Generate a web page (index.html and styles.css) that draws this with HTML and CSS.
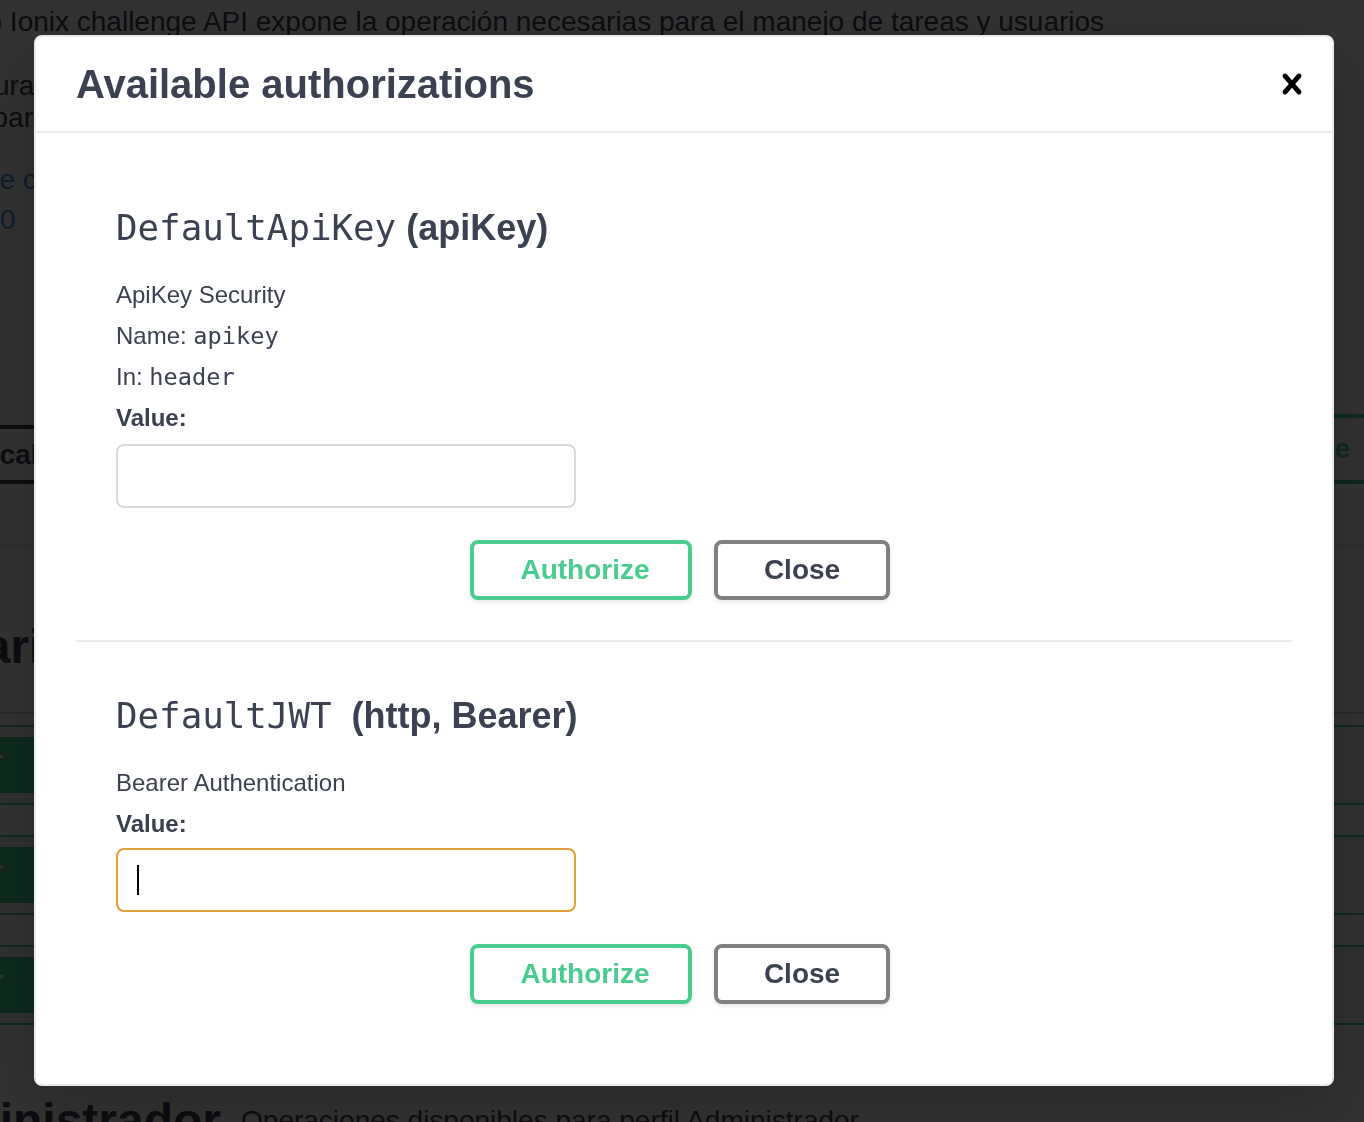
FILE: index.html
```html
<!DOCTYPE html>
<html lang="es">
<head>
<meta charset="utf-8">
<title>Swagger UI - Available authorizations</title>
<link rel="stylesheet" href="styles.css">
</head>
<body>
<div class="page">
  <div class="info">
    <div class="bg-line line-1">El proyecto Ionix challenge API expone la operación necesarias para el manejo de tareas y usuarios</div>
    <div class="bg-line line-2">La estructura del proyecto se basa en servicios REST con autenticación</div>
    <div class="bg-line line-3">Disponible para perfiles de usuario y administrador</div>
    <div class="bg-link line-4">Contacte con el desarrollador</div>
    <div class="bg-link line-5">Apache 2.0</div>
  </div>

  <div class="scheme-container">
    <div class="select-box">http://localhost:8080</div>
    <div class="top-authorize"><span class="top-authorize-text">Authorize</span><svg width="40" height="40" viewBox="0 0 20 20"><path fill="#49cc90" d="M15.8 8H14V5.6C14 2.703 12.665 1 10 1 7.334 1 6 2.703 6 5.6V8H4c-.553 0-1 .646-1 1.199V17c0 .549.428 1.139.951 1.307l1.197.387C5.672 18.861 6.550 19 7.100 19h5.8c.549 0 1.428-.139 1.951-.307l1.196-.387c.524-.167.953-.757.953-1.306V9.199C17 8.646 16.352 8 15.8 8zM12 8H8V5.199C8 3.754 8.797 3 10 3s2 .754 2 2.199V8z"/></svg></div>
  </div>

  <div class="tag-section">
    <div class="tag-heading"><span class="tag-name">Usuario</span><span class="tag-desc">Operaciones disponibles para perfil Usuario</span></div>
    <div class="opblock"><div class="op-summary"><span class="op-method">POST</span><span class="op-path">/usuario/tareas</span></div></div>
    <div class="opblock"><div class="op-summary"><span class="op-method">POST</span><span class="op-path">/usuario/tareas/estado</span></div></div>
    <div class="opblock"><div class="op-summary"><span class="op-method">POST</span><span class="op-path">/usuario/tareas/listar</span></div></div>
  </div>

  <div class="tag-section tag-section-next">
    <div class="tag-heading"><span class="tag-name">Administrador</span><span class="tag-desc">Operaciones disponibles para perfil Administrador</span></div>
  </div>
</div>

<div class="backdrop"></div>

<div class="modal">
  <div class="modal-header">
    <h3 class="modal-title">Available authorizations</h3>
    <button class="close-modal" type="button" aria-label="Close">
      <svg width="40" height="40" viewBox="0 0 20 20"><path d="M14.348 14.849a1.2 1.2 0 0 1-1.697 0L10 11.819l-2.651 3.029a1.2 1.2 0 1 1-1.697-1.697l2.758-3.150-2.759-3.152a1.2 1.2 0 1 1 1.697-1.697L10 8.183l2.651-3.031a1.2 1.2 0 1 1 1.697 1.697l-2.758 3.152 2.758 3.150a1.2 1.2 0 0 1 0 1.698z"/></svg>
    </button>
  </div>
  <div class="modal-content">
    <div class="auth-container">
      <h4 class="auth-title"><code class="auth-code">DefaultApiKey</code> (apiKey)</h4>
      <p class="auth-line">ApiKey Security</p>
      <p class="auth-line">Name: <code class="line-code">apikey</code></p>
      <p class="auth-line">In: <code class="line-code">header</code></p>
      <label class="auth-line auth-label">Value:</label>
      <div class="input-wrap"><input class="auth-input" type="text"></div>
      <div class="auth-btns">
        <button class="btn btn-authorize" type="button">Authorize</button>
        <button class="btn btn-close" type="button">Close</button>
      </div>
    </div>
    <div class="auth-container auth-last">
      <h4 class="auth-title"><code class="auth-code">DefaultJWT</code>&nbsp; (http, Bearer)</h4>
      <p class="auth-line">Bearer Authentication</p>
      <label class="auth-line auth-label">Value:</label>
      <div class="input-wrap input-focused"><input class="auth-input" type="text"></div>
      <div class="auth-btns">
        <button class="btn btn-authorize" type="button">Authorize</button>
        <button class="btn btn-close" type="button">Close</button>
      </div>
    </div>
  </div>
</div>
</body>
</html>
```

FILE: styles.css
```css
html, body {
  margin: 0;
  padding: 0;
}

body {
  background: #fff;
  overflow: hidden;
  width: 1364px;
  height: 1122px;
  font-family: "Liberation Sans", Arial, Helvetica, sans-serif;
  color: #3b4151;
}

/* ---------- background page ---------- */
.page {
  margin-left: -127px;
  width: 1607px;
}

.info {
  padding-top: 6px;
}

.bg-line,
.bg-link {
  font-size: 28px;
  line-height: 32px;
  white-space: nowrap;
}

.bg-link {
  color: #4990e2;
}

.line-1 { margin-left: -11px; }
.line-2 { margin-left: -2px; margin-top: 32px; }
.line-3 { margin-left: -19px; }
.line-4 { margin-left: 30px; margin-top: 30px; }
.line-5 { margin-left: 1px; margin-top: 8px; }

.scheme-container {
  margin-top: 118px;
  padding: 60px 0;
  background: #fff;
  box-shadow: 0 2px 4px 0 rgba(0, 0, 0, .15);
  display: flex;
  justify-content: space-between;
  align-items: flex-end;
}

.select-box {
  box-sizing: border-box;
  height: 59px;
  border: 4px solid #41444e;
  border-radius: 8px;
  padding: 0 80px 0 20px;
  font-size: 28px;
  font-weight: bold;
  line-height: 51px;
  white-space: nowrap;
}

.top-authorize {
  box-sizing: border-box;
  height: 70px;
  border: 4px solid #49cc90;
  border-radius: 8px;
  padding: 0 46px;
  display: flex;
  align-items: center;
  color: #49cc90;
  font-size: 28px;
  font-weight: bold;
}

.top-authorize-text {
  padding-right: 40px;
}

.tag-section {
  margin-top: 37px;
}

.tag-section-next {
  margin-top: 30px;
}

.tag-heading {
  display: flex;
  align-items: center;
  padding: 20px 40px 20px 20px;
  line-height: 91px;
  border-bottom: 2px solid rgba(59, 65, 81, .3);
  margin-bottom: 11px;
  white-space: nowrap;
}

.tag-name {
  font-size: 48px;
  font-weight: bold;
}

.tag-desc {
  font-size: 28px;
  padding: 0 20px;
}

.opblock {
  border: 2px solid #49cc90;
  border-radius: 8px;
  background: rgba(73, 204, 144, .1);
  margin-bottom: 30px;
}

.op-summary {
  display: flex;
  align-items: center;
  padding: 10px;
}

.op-method {
  min-width: 160px;
  padding: 12px 0;
  border-radius: 6px;
  background: #49cc90;
  color: #fff;
  text-align: center;
  font-size: 28px;
  font-weight: bold;
  line-height: 32px;
}

.op-path {
  padding: 0 20px;
  font-family: "DejaVu Sans Mono", monospace;
  font-size: 32px;
  font-weight: bold;
}

/* ---------- overlay ---------- */
.backdrop {
  position: fixed;
  inset: 0;
  background: rgba(0, 0, 0, .8);
}

/* ---------- modal ---------- */
.modal {
  position: absolute;
  top: 35px;
  left: 34px;
  width: 1300px;
  box-sizing: border-box;
  background: #fff;
  border: 2px solid #ebebeb;
  border-radius: 8px;
  box-shadow: 0 20px 60px 0 rgba(0, 0, 0, .2);
}

.modal-header {
  display: flex;
  align-items: center;
  padding: 24px 0;
  border-bottom: 2px solid #ebebeb;
}

.modal-title {
  flex: 1;
  margin: 0;
  padding: 0 40px;
  font-size: 40px;
  line-height: 46px;
  font-weight: bold;
  color: #3b4151;
}

.close-modal {
  background: none;
  border: 0;
  padding: 0 20px;
  display: flex;
  cursor: pointer;
}

.close-modal svg {
  fill: #000;
}

.modal-content {
  padding: 40px;
}

.auth-container {
  padding: 20px 40px;
  margin-bottom: 20px;
  border-bottom: 2px solid #ebebeb;
}

.auth-last {
  border-bottom: 0;
  margin-bottom: 0;
}

.auth-title {
  margin: 10px 0 30px;
  font-size: 36px;
  line-height: 50px;
  font-weight: bold;
  color: #3b4151;
  white-space: nowrap;
}

.auth-code {
  font-family: "DejaVu Sans Mono", "Liberation Mono", monospace;
  font-weight: normal;
  font-size: 35.8px;
}

.auth-last .auth-title {
  margin-top: 9px;
}

.auth-line {
  display: block;
  margin: 0 0 17px;
  font-size: 24px;
  line-height: 24px;
  color: #3b4151;
}

.line-code {
  font-family: "DejaVu Sans Mono", "Liberation Mono", monospace;
  font-size: 23.6px;
}

.auth-label {
  font-weight: bold;
  margin-bottom: 0;
}

.input-wrap {
  position: relative;
  width: 460px;
  margin: 14px 0 12px;
}

.auth-last .input-wrap {
  margin-top: 12px;
}

.auth-input {
  display: block;
  box-sizing: border-box;
  width: 460px;
  height: 64px;
  padding: 0 20px;
  border: 2px solid #d9d9d9;
  border-radius: 8px;
  background: #fff;
  font-size: 24px;
  font-family: "Liberation Sans", Arial, sans-serif;
  outline: none;
  caret-color: transparent;
}

.input-focused .auth-input {
  border-color: #e69c38;
}

.input-focused::after {
  content: "";
  position: absolute;
  left: 21px;
  top: 17px;
  width: 2px;
  height: 30px;
  background: #000;
}

.auth-btns {
  display: flex;
  justify-content: center;
  gap: 22px;
  padding: 20px 8px 20px 0;
}

.btn {
  box-sizing: border-box;
  height: 60px;
  border: 4px solid #808080;
  border-radius: 8px;
  background: transparent;
  box-shadow: 0 2px 4px 0 rgba(0, 0, 0, .1);
  font-family: "Liberation Sans", Arial, sans-serif;
  font-size: 28px;
  font-weight: bold;
  line-height: 32px;
  padding: 0;
  cursor: pointer;
}

.btn-authorize {
  width: 222px;
  padding-left: 8px;
  color: #49cc90;
  border-color: #49cc90;
}

.btn-close {
  width: 176px;
  color: #3b4151;
  border-color: #808080;
}
```
